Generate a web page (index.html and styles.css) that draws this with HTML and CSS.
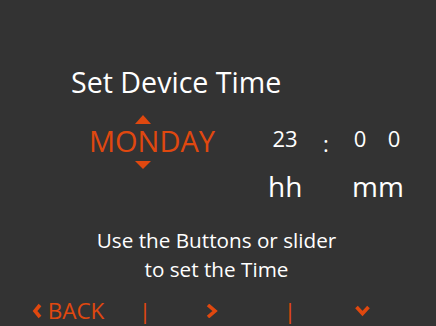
FILE: index.html
```html
<!DOCTYPE html>
<html lang="en">
<head>
    <meta charset="UTF-8">
    <title>Set Device Time</title>
    <link rel="stylesheet" href="styles.css">
</head>
<body>
    <div class="screen">
        <h1 class="title">Set Device Time</h1>

        <div class="setter">
            <div class="day-picker">
                <span class="arrow arrow-up"></span>
                <span class="day">MONDAY</span>
                <span class="arrow arrow-down"></span>
            </div>

            <div class="clock">
                <span class="digit hours">23</span>
                <span class="digit colon">:</span>
                <span class="digit">0</span>
                <span class="digit">0</span>
                <span class="unit hours">hh</span>
                <span class="unit minutes">mm</span>
            </div>
        </div>

        <p class="hint">Use the Buttons or slider<br>to set the Time</p>

        <div class="nav">
            <div class="nav-item back">
                <svg width="10" height="16" viewBox="0 0 10 16"><polyline points="8,2 3,8 8,14" fill="none" stroke="#e0480f" stroke-width="3.6"/></svg>
                <span>BACK</span>
            </div>
            <div class="nav-item sep">|</div>
            <div class="nav-item next">
                <svg width="12" height="14" viewBox="0 0 12 14"><polyline points="2,1 9,7 2,13" fill="none" stroke="#e0480f" stroke-width="3.6"/></svg>
            </div>
            <div class="nav-item sep sep-wide">|</div>
            <div class="nav-item down">
                <svg width="15" height="12" viewBox="0 0 15 12"><polyline points="1.5,2 7.5,8.5 13.5,2" fill="none" stroke="#e0480f" stroke-width="3.6"/></svg>
            </div>
        </div>
    </div>
</body>
</html>
```

FILE: styles.css
```css
body {
    margin: 0;
    background-color: #333333;
    font-family: "Open Sans", "Noto Sans", sans-serif;
    color: #ffffff;
}
.screen {
    width: 436px;
    height: 326px;
    box-sizing: border-box;
    padding-top: 64px;
    overflow: hidden;
}
.title {
    margin: 0 0 0 71px;
    font-size: 28.6px;
    font-weight: normal;
    line-height: 36px;
}
.setter {
    display: flex;
    margin-top: 15px;
}
.day-picker {
    width: 126px;
    margin-left: 89px;
    display: flex;
    flex-direction: column;
    align-items: center;
}
.day {
    color: #e0480f;
    font-size: 29px;
    line-height: 30px;
    margin-top: 2px;
}
.arrow {
    width: 0;
    height: 0;
    margin-right: 19px;
    border-left: 8px solid transparent;
    border-right: 8px solid transparent;
}
.arrow-up {
    border-bottom: 9px solid #e0480f;
}
.arrow-down {
    border-top: 8px solid #e0480f;
    margin-top: 5px;
}
.clock {
    display: grid;
    grid-template-columns: 34px 48px 20px 48px;
    margin-left: 53px;
    margin-top: 8px;
}
.digit {
    font-size: 22px;
    line-height: 30px;
    text-align: center;
}
.colon {
    padding-top: 5px;
}
.unit {
    font-size: 28px;
    line-height: 36px;
    margin-top: 10px;
}
.unit.hours {
    grid-column: 1;
    text-align: center;
}
.unit.minutes {
    grid-column: 3 / 5;
    padding-left: 2px;
}
.hint {
    margin: 22px 0 0;
    padding-right: 3px;
    text-align: center;
    font-size: 20.7px;
    line-height: 29px;
}
.nav {
    display: flex;
    align-items: center;
    margin-top: 17px;
    color: #e0480f;
    font-size: 22.5px;
    line-height: 20px;
}
.nav-item {
    display: flex;
    align-items: center;
    justify-content: center;
}
.back {
    width: 136px;
    gap: 6px;
}
.sep {
    width: 18px;
}
.next {
    width: 116px;
}
.sep-wide {
    width: 40px;
}
.down {
    width: 104px;
}
```
